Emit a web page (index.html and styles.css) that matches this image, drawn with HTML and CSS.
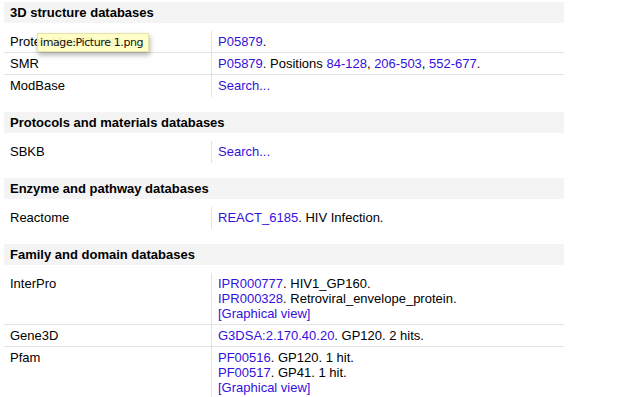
FILE: index.html
```html
<!DOCTYPE html>
<html lang="en">
<head>
    <meta charset="UTF-8">
    <title>Cross-references</title>
    <link rel="stylesheet" href="styles.css">
</head>
<body>

    <div class="xrefs">
        <!-- 3D structure -->
        <div class="section">
            <div class="section-title">3D structure databases</div>
            <table class="db-table">
                <tr>
                    <td class="db-name">ProteinModelPortal</td>
                    <td class="db-value"><a href="#">P05879</a>.</td>
                </tr>
                <tr>
                    <td class="db-name">SMR</td>
                    <td class="db-value"><a href="#">P05879</a>. Positions <a href="#">84-128</a>, <a href="#">206-503</a>, <a href="#">552-677</a>.</td>
                </tr>
                <tr>
                    <td class="db-name">ModBase</td>
                    <td class="db-value"><a href="#">Search...</a></td>
                </tr>
            </table>
        </div>

        <div class="section">
            <div class="section-title">Protocols and materials databases</div>
            <table class="db-table">
                <tr>
                    <td class="db-name">SBKB</td>
                    <td class="db-value"><a href="#">Search...</a></td>
                </tr>
            </table>
        </div>

        <div class="section">
            <div class="section-title">Enzyme and pathway databases</div>
            <table class="db-table">
                <tr>
                    <td class="db-name">Reactome</td>
                    <td class="db-value"><a href="#">REACT_6185</a>. HIV Infection.</td>
                </tr>
            </table>
        </div>

        <div class="section">
            <div class="section-title">Family and domain databases</div>
            <table class="db-table">
                <tr>
                    <td class="db-name">InterPro</td>
                    <td class="db-value">
                        <a href="#">IPR000777</a>. HIV1_GP160.<br>
                        <a href="#">IPR000328</a>. Retroviral_envelope_protein.<br>
                        <a href="#">[Graphical view]</a>
                    </td>
                </tr>
                <tr>
                    <td class="db-name">Gene3D</td>
                    <td class="db-value"><a href="#">G3DSA:2.170.40.20</a>. GP120. 2 hits.</td>
                </tr>
                <tr>
                    <td class="db-name">Pfam</td>
                    <td class="db-value">
                        <a href="#">PF00516</a>. GP120. 1 hit.<br>
                        <a href="#">PF00517</a>. GP41. 1 hit.<br>
                        <a href="#">[Graphical view]</a>
                    </td>
                </tr>
            </table>
        </div>
    </div>

    <!-- hover tooltip over the portal logo -->
    <div class="tooltip">image:Picture 1.png</div>

</body>
</html>
```

FILE: styles.css
```css
body {
    margin: 0;
    padding: 2px 4px;
    font-family: "Liberation Sans", Arial, sans-serif;
    font-size: 13px;
    color: #000;
    background: #fff;
}

a {
    color: #3311dd;
    text-decoration: none;
}

.xrefs {
    width: 560px;
}

.section {
    margin-bottom: 15px;
}

.section-title {
    background: #f4f4f4;
    font-weight: bold;
    height: 21px;
    line-height: 21px;
    padding-left: 6px;
}

.db-table {
    width: 100%;
    margin-top: 8px;
    border-collapse: collapse;
}

.db-table tr {
    border-bottom: 1px solid #e2e2e2;
}

.db-table tr:last-child {
    border-bottom-color: transparent;
}

.db-table td {
    padding: 3px 6px;
    line-height: 15px;
    vertical-align: top;
}

.db-name {
    width: 195px;
}

.db-value {
    border-left: 1px solid #e2e2e2;
}

.tooltip {
    position: absolute;
    left: 37px;
    top: 33px;
    width: 112px;
    height: 19px;
    box-sizing: border-box;
    padding-left: 2px;
    line-height: 18px;
    font-family: "DejaVu Sans", sans-serif;
    font-size: 11px;
    letter-spacing: -0.4px;
    color: #111;
    background: rgba(255, 255, 196, 0.94);
    border: 1px solid #e4e4a8;
    box-shadow: 1px 3px 5px rgba(0, 0, 0, 0.3);
    white-space: nowrap;
}
```
